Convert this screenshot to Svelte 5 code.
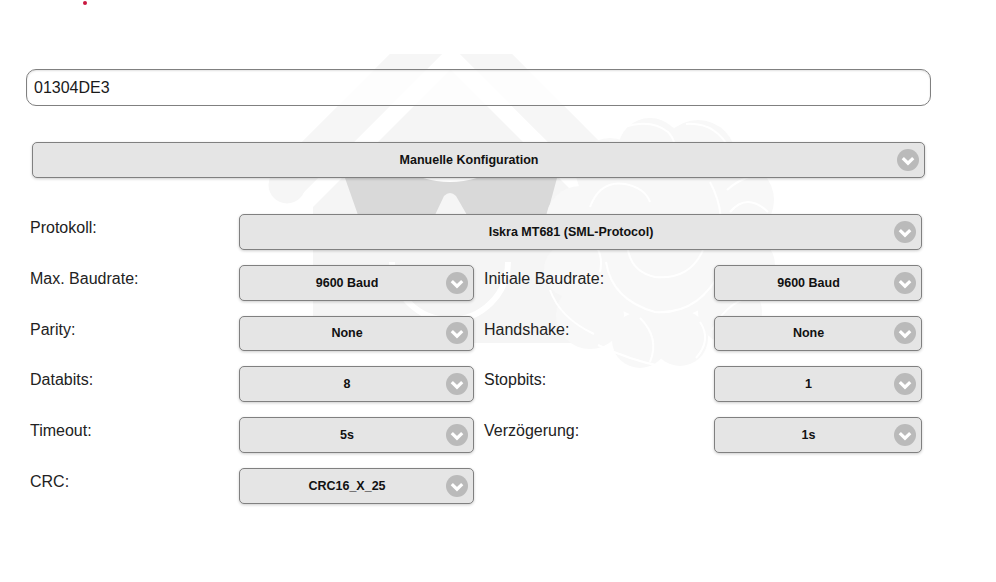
<script>
  const rows = [
    [{ label: 'Protokoll:', value: 'Iskra MT681 (SML-Protocol)', wide: true }],
    [{ label: 'Max. Baudrate:', value: '9600 Baud' }, { label: 'Initiale Baudrate:', value: '9600 Baud' }],
    [{ label: 'Parity:', value: 'None' }, { label: 'Handshake:', value: 'None' }],
    [{ label: 'Databits:', value: '8' }, { label: 'Stopbits:', value: '1' }],
    [{ label: 'Timeout:', value: '5s' }, { label: 'Verzögerung:', value: '1s' }],
    [{ label: 'CRC:', value: 'CRC16_X_25' }]
  ];
  const lobes = [
    [650, 150, 32], [610, 172, 34], [698, 158, 38], [736, 200, 38],
    [580, 220, 34], [572, 270, 28], [745, 265, 30], [590, 315, 34], [730, 312, 32],
    [640, 340, 28], [680, 338, 28], [660, 240, 80]
  ];
  const arcs = [
    'M590 207 Q600 180 625 184 Q645 188 650 202',
    'M628 250 Q632 272 655 277 Q690 280 703 250',
    'M606 262 Q612 300 655 312 Q700 315 722 268',
    'M727 190 Q738 180 752 176',
    'M730 212 Q747 192 768 212',
    'M550 290 Q560 318 594 334',
    'M555 240 Q572 228 592 240 Q604 254 600 272',
    'M712 330 Q730 296 762 296',
    'M598 345 Q630 360 660 366',
    'M640 318 Q660 338 650 362',
    'M700 322 Q712 340 696 358',
    'M622 128 Q650 118 668 132 Q680 145 672 162',
    'M686 124 Q716 122 730 150',
    'M565 180 Q585 160 610 142',
    'M710 182 Q728 216 716 246'
  ];
</script>

{#snippet pick(value, cls)}
  <button class="pick {cls}" type="button">
    <span class="text">{value}</span>
    <svg class="chev" viewBox="0 0 22 22" width="22" height="22" aria-hidden="true">
      <circle cx="11" cy="11" r="11" fill="#bababa" />
      <path d="M5.8 9.2 11 14.2 16.2 9.2" fill="none" stroke="#fff" stroke-width="3.2" />
    </svg>
  </button>
{/snippet}

<div class="page">
  <svg class="mark" viewBox="0 0 996 582" width="996" height="582" aria-hidden="true">
    <defs>
      <clipPath id="top"><rect x="0" y="54" width="996" height="528" /></clipPath>
    </defs>
    <path d="M286 184 L451 19 L600 168" fill="none" stroke="#f6f6f6" stroke-width="37" clip-path="url(#top)" />
    <circle cx="287" cy="185" r="18.5" fill="#f6f6f6" />
    <path d="M450.5 69.5 L573 192 V343 H313 V207 Z" fill="#f5f5f5" />
    <path d="M345 178 H557 L547 215 H467 L456 196 Q450 190 444 196 L435 215 H358 Z" fill="#d9d9d9" />
    <path d="M423 178 Q450 186 477 178 Z" fill="#fff" />
    <path d="M508 262 A58 58 0 0 1 392 262" fill="none" stroke="#fff" stroke-width="6" />
    {#each lobes as [cx, cy, r]}
      <circle {cx} {cy} {r} fill="#f8f8f8" />
    {/each}
    {#each arcs as d}
      <path {d} fill="none" stroke="#fff" stroke-width="2" />
    {/each}
  </svg>

  <span class="dot"></span>

  <input class="serial" value="01304DE3" />

  <div class="head">
    {@render pick('Manuelle Konfiguration', 'full')}
  </div>

  <div class="form">
    {#each rows as row}
      {#each row as cell}
        <span class="label" class:second={row[1] === cell}>{cell.label}</span>
        {@render pick(cell.value, cell.wide ? 'span3' : '')}
      {/each}
    {/each}
  </div>
</div>

<style>
  :global(body) {
    margin: 0;
    background: #fff;
    font-family: "Liberation Sans", Arial, sans-serif;
    color: #1a1a1a;
  }
  .page {
    position: relative;
    width: 996px;
    height: 582px;
    overflow: hidden;
    padding-top: 69px;
    box-sizing: border-box;
  }
  .mark {
    position: absolute;
    left: 0;
    top: 0;
    z-index: 0;
  }
  .dot {
    position: absolute;
    left: 83px;
    top: 1px;
    width: 4px;
    height: 4px;
    border-radius: 50%;
    background: #c9173f;
  }
  .serial {
    position: relative;
    display: block;
    box-sizing: border-box;
    width: 905px;
    height: 37px;
    margin-left: 26px;
    padding: 0 7px;
    border: 1px solid #808080;
    border-radius: 10px;
    background: rgba(255, 255, 255, 0.8);
    box-shadow: inset 0 1px 2px rgba(0, 0, 0, 0.12);
    font: 16px "Liberation Sans", Arial, sans-serif;
    color: #1a1a1a;
    outline: none;
  }
  .head {
    position: relative;
    margin: 36px 0 36px 32px;
    width: 893px;
  }
  .form {
    position: relative;
    display: grid;
    grid-template-columns: 209px 235px 240px 208px;
    grid-auto-rows: 35.8px;
    row-gap: 15px;
    margin-left: 30px;
    width: 892px;
  }
  .label {
    font-size: 16px;
    line-height: 18px;
    padding-top: 5px;
    color: #222;
  }
  .label.second {
    padding-left: 10px;
  }
  .pick {
    display: flex;
    align-items: center;
    box-sizing: border-box;
    width: 100%;
    height: 100%;
    padding: 0 5px 0 4px;
    border: 1px solid #808080;
    border-radius: 5px;
    background: #e5e5e5;
    box-shadow: 0 1px 3px rgba(0, 0, 0, 0.2);
    font: bold 12.5px "Liberation Sans", Arial, sans-serif;
    color: #111;
    cursor: pointer;
  }
  .pick.full {
    height: 36px;
  }
  .pick.span3 {
    grid-column: span 3;
  }
  .text {
    flex: 1;
    text-align: center;
  }
  .chev {
    flex: none;
    margin-left: -4px;
  }
</style>
